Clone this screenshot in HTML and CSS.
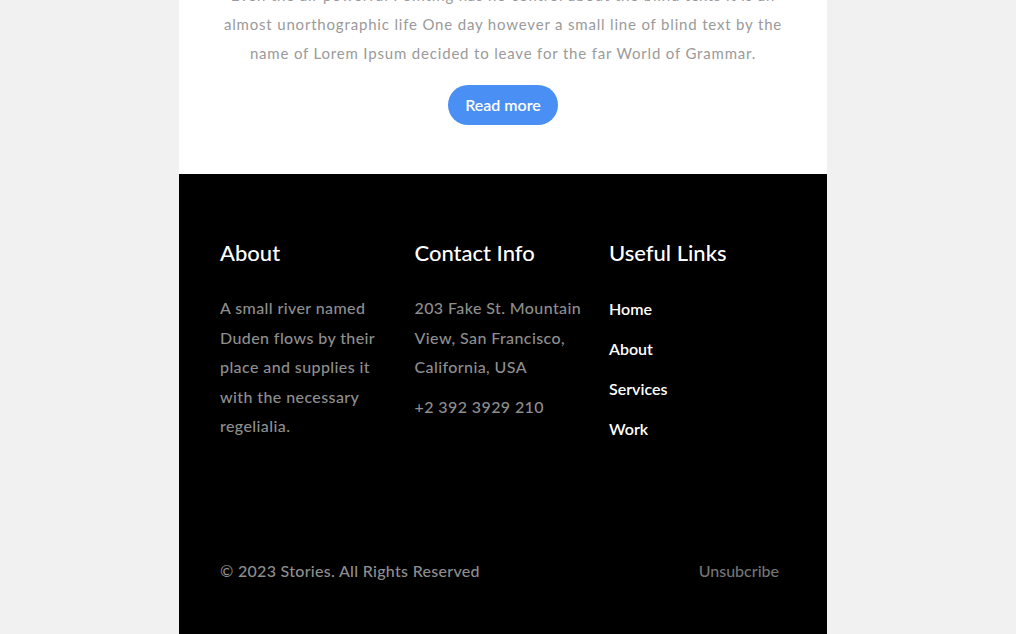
FILE: index.html
```html
<!DOCTYPE html>
<html>
<head>
<meta charset="utf-8">
<link rel="stylesheet" href="styles.css">
</head>
<body>
<div class="page">
  <section class="story">
    <p class="story-text">Even the all-powerful Pointing has no control about the blind texts it is an almost unorthographic life One day however a small line of blind text by the name of Lorem Ipsum decided to leave for the far World of Grammar.</p>
    <a class="btn" href="#">Read more</a>
  </section>
  <footer class="footer">
    <div class="cols">
      <div class="col">
        <h3 class="col-title">About</h3>
        <p class="col-text">A small river named Duden flows by their place and supplies it with the necessary regelialia.</p>
      </div>
      <div class="col">
        <h3 class="col-title">Contact Info</h3>
        <p class="col-text">203 Fake St. Mountain View, San Francisco, California, USA</p>
        <p class="col-text phone">+2 392 3929 210</p>
      </div>
      <div class="col">
        <h3 class="col-title">Useful Links</h3>
        <ul class="links">
          <li><a href="#">Home</a></li>
          <li><a href="#">About</a></li>
          <li><a href="#">Services</a></li>
          <li><a href="#">Work</a></li>
        </ul>
      </div>
    </div>
    <div class="bottom">
      <span class="copy">© 2023 Stories. All Rights Reserved</span>
      <a class="unsub" href="#">Unsubcribe</a>
    </div>
  </footer>
</div>
</body>
</html>
```
FILE: styles.css
```css
html, body {
  margin: 0;
  padding: 0;
  background: #f1f1f1;
  font-family: "Lato", "Liberation Sans", sans-serif;
}
body {
  padding-right: 10px;
}
.page {
  width: 648px;
  margin: 0 auto;
}
.story {
  background: #fff;
  margin-top: -19px;
  padding: 0 38px 49px;
  text-align: center;
}
.story-text {
  margin: 0;
  font-size: 15px;
  line-height: 29px;
  color: #9a9a9a;
  letter-spacing: 0.82px;
}
.btn {
  display: inline-block;
  margin-top: 17px;
  height: 40px;
  line-height: 39px;
  padding: 0 17.5px;
  border-radius: 20px;
  background: #4a8ff3;
  color: #fff;
  font-size: 16px;
  font-weight: 600;
  text-decoration: none;
}
.footer {
  background: #000;
  padding: 66px 48px 54px 41px;
}
.cols {
  display: grid;
  grid-template-columns: 194.5px 194.5px 1fr;
}
.col-title {
  margin: 0 0 27px;
  font-size: 22px;
  line-height: 26px;
  font-weight: 500;
  color: #fff;
}
.col-text {
  margin: 0;
  font-size: 16px;
  line-height: 29.5px;
  color: #8e8e8e;
  font-weight: 500;
  letter-spacing: 0.4px;
  padding-right: 26px;
}
.phone {
  margin-top: 10px;
}
.links {
  list-style: none;
  margin: 0;
  padding: 0;
  display: flex;
  flex-direction: column;
  gap: 16px;
  padding-top: 4px;
}
.links a {
  display: block;
  font-size: 16px;
  line-height: 24px;
  font-weight: 600;
  color: #fff;
  text-decoration: none;
}
.bottom {
  margin-top: 118px;
  display: flex;
  justify-content: space-between;
  align-items: center;
  font-size: 16px;
  line-height: 24px;
  font-weight: 500;
}
.copy {
  color: #8e8e8e;
  letter-spacing: 0.3px;
}
.unsub {
  color: #747474;
  text-decoration: none;
}
```
